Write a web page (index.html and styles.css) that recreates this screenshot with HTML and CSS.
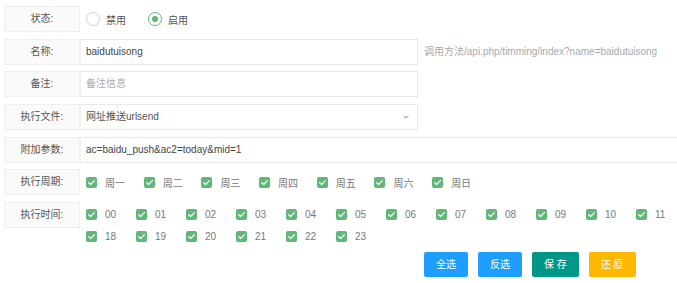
FILE: index.html
```html
<!DOCTYPE html>
<html lang="zh-CN">
<head>
<meta charset="utf-8">
<title>定时任务</title>
<link rel="stylesheet" href="styles.css">
</head>
<body>
<form class="form">
  <div class="row">
    <label class="label">状态:</label>
    <div class="radios">
      <span class="radio"><i class="circle"></i><span>禁用</span></span>
      <span class="radio"><i class="circle on"></i><span>启用</span></span>
    </div>
  </div>
  <div class="row">
    <label class="label">名称:</label>
    <div class="input">baidutuisong</div>
    <div class="hint">调用方法/api.php/timming/index?name=baidutuisong</div>
  </div>
  <div class="row">
    <label class="label">备注:</label>
    <div class="input placeholder">备注信息</div>
  </div>
  <div class="row">
    <label class="label">执行文件:</label>
    <div class="input select">网址推送urlsend<i class="arrow"></i></div>
  </div>
  <div class="row">
    <label class="label">附加参数:</label>
    <div class="input wide">ac=baidu_push&amp;ac2=today&amp;mid=1</div>
  </div>
  <div class="row">
    <label class="label">执行周期:</label>
    <div class="checks week">
      <span class="check"><i class="box"></i>周一</span>
      <span class="check"><i class="box"></i>周二</span>
      <span class="check"><i class="box"></i>周三</span>
      <span class="check"><i class="box"></i>周四</span>
      <span class="check"><i class="box"></i>周五</span>
      <span class="check"><i class="box"></i>周六</span>
      <span class="check"><i class="box"></i>周日</span>
    </div>
  </div>
  <div class="row last">
    <label class="label">执行时间:</label>
    <div class="checks hours">
      <span class="check"><i class="box"></i>00</span>
      <span class="check"><i class="box"></i>01</span>
      <span class="check"><i class="box"></i>02</span>
      <span class="check"><i class="box"></i>03</span>
      <span class="check"><i class="box"></i>04</span>
      <span class="check"><i class="box"></i>05</span>
      <span class="check"><i class="box"></i>06</span>
      <span class="check"><i class="box"></i>07</span>
      <span class="check"><i class="box"></i>08</span>
      <span class="check"><i class="box"></i>09</span>
      <span class="check"><i class="box"></i>10</span>
      <span class="check"><i class="box"></i>11</span>
      <span class="check"><i class="box"></i>12</span>
      <span class="check"><i class="box"></i>13</span>
      <span class="check"><i class="box"></i>14</span>
      <span class="check"><i class="box"></i>15</span>
      <span class="check"><i class="box"></i>16</span>
      <span class="check"><i class="box"></i>17</span>
      <span class="check"><i class="box"></i>18</span>
      <span class="check"><i class="box"></i>19</span>
      <span class="check"><i class="box"></i>20</span>
      <span class="check"><i class="box"></i>21</span>
      <span class="check"><i class="box"></i>22</span>
      <span class="check"><i class="box"></i>23</span>
    </div>
  </div>
  <div class="buttons">
    <button type="button" class="btn blue">全选</button>
    <button type="button" class="btn blue">反选</button>
    <button type="button" class="btn teal">保 存</button>
    <button type="button" class="btn orange">还 原</button>
  </div>
</form>
</body>
</html>
```
FILE: styles.css
```css
html, body {
  margin: 0;
  padding: 0;
  overflow: hidden;
  background: #fff;
}
body {
  font-family: "Liberation Sans", "Noto Sans CJK SC", sans-serif;
  font-size: 10px;
  color: #333;
}
.form {
  width: 1000px;
  padding: 6px 0 0 4px;
  margin: 0;
}
.row {
  display: flex;
  align-items: flex-start;
  margin-bottom: 6.7px;
}
.row.last {
  margin-bottom: 4px;
}
.label {
  box-sizing: border-box;
  width: 76px;
  height: 26px;
  flex: none;
  background: #fafafa;
  border: 1px solid #efefef;
  color: #555;
  text-align: center;
  line-height: 24px;
}
.input {
  box-sizing: border-box;
  position: relative;
  width: 338px;
  height: 26px;
  flex: none;
  border: 1px solid #e8e8e8;
  border-left-color: #efefef;
  background: #fff;
  padding-left: 5px;
  line-height: 24px;
  color: #444;
}
.input.wide {
  width: 860px;
}
.input.placeholder {
  color: #aaa;
}
.input.select {
  color: #555;
}
.arrow {
  position: absolute;
  right: 8px;
  top: 11px;
  width: 0;
  height: 0;
  border-left: 3px solid transparent;
  border-right: 3px solid transparent;
  border-top: 3px solid #c2c2c2;
}
.hint {
  flex: none;
  padding-left: 6px;
  line-height: 26px;
  color: #a8a8a8;
  white-space: nowrap;
}
.radios {
  display: flex;
  padding-left: 6px;
  height: 26px;
  align-items: center;
}
.radio {
  display: flex;
  align-items: center;
  width: 62px;
  color: #555;
}
.circle {
  box-sizing: border-box;
  width: 14px;
  height: 14px;
  border-radius: 50%;
  border: 1px solid #cfcfcf;
  margin-right: 6px;
  display: flex;
  align-items: center;
  justify-content: center;
}
.circle.on {
  border-color: #5fb878;
}
.circle.on::after {
  content: "";
  width: 6px;
  height: 6px;
  border-radius: 50%;
  background: #5fb878;
}
.checks {
  flex: none;
  display: flex;
  flex-wrap: wrap;
  padding-left: 6px;
  color: #777;
}
.week {
  height: 26px;
  align-items: center;
}
.week .check {
  width: 57.7px;
}
.hours {
  width: 900px;
  padding-top: 1.5px;
}
.hours .check {
  width: 50px;
  height: 22px;
}
.check {
  display: flex;
  align-items: center;
}
.box {
  flex: none;
  width: 11px;
  height: 11px;
  border-radius: 2px;
  background: #5fb878 url("data:image/svg+xml;utf8,<svg xmlns='http://www.w3.org/2000/svg' viewBox='0 0 11 11'><path d='M2.6 5.6 L4.6 7.5 L8.4 3.6' fill='none' stroke='white' stroke-width='1.3' stroke-linecap='round' stroke-linejoin='round'/></svg>") no-repeat center / 11px 11px;
  margin-right: 8px;
}
.buttons {
  display: flex;
  gap: 10px;
  padding-left: 420px;
}
.btn {
  height: 25px;
  padding: 0 12px;
  border: none;
  border-radius: 2px;
  color: #fff;
  font-family: "Liberation Sans", "Noto Sans CJK SC", sans-serif;
  font-size: 10px;
  line-height: 25px;
  cursor: pointer;
}
.blue { background: #1e9fff; }
.teal { background: #009688; }
.orange { background: #ffb800; }
```
